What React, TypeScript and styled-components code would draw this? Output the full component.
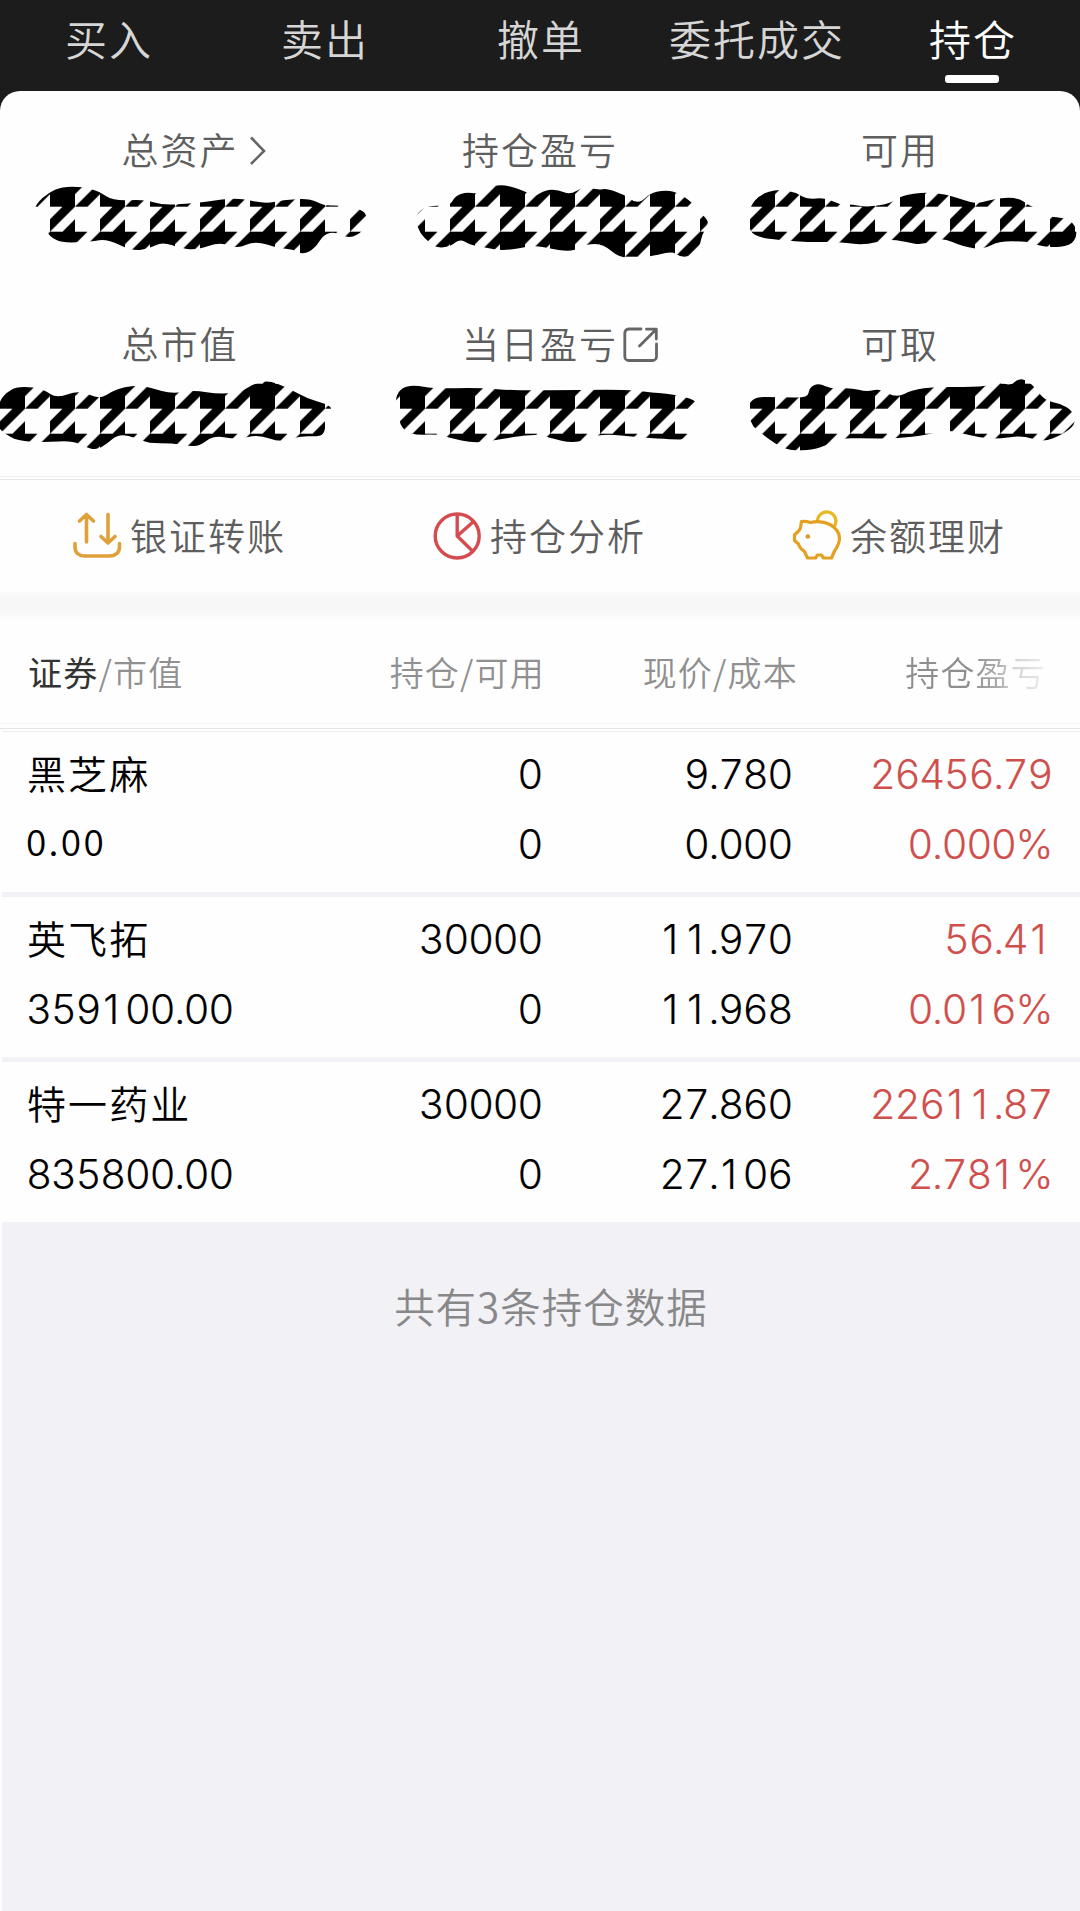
import React from "react";
import styled, { createGlobalStyle } from "styled-components";

const Global = createGlobalStyle`
  html, body { margin: 0; padding: 0; background: #fff; }
  * { box-sizing: border-box; }
`;

const cjk = `"Noto Sans CJK SC", "Noto Sans", sans-serif`;

const Page = styled.div`
  width: 1080px;
  height: 1911px;
  display: flex;
  flex-direction: column;
  overflow: hidden;
  background: #fefefe;
  font-family: ${cjk};
  font-weight: 350;
  white-space: nowrap;
`;

const Top = styled.div`
  background: #1c1c1c;
`;

const Tabs = styled.nav`
  height: 91px;
  display: grid;
  grid-template-columns: repeat(5, 216px);
`;

const Tab = styled.div<{ $active?: boolean }>`
  display: flex;
  flex-direction: column;
  align-items: center;
  padding-top: 8px;
  gap: 7px;
  font-size: 42px;
  line-height: 60px;
  letter-spacing: 2px;
  text-indent: 2px;
  color: ${(p) => (p.$active ? "#ffffff" : "#d6d6d6")};
`;

const Underline = styled.span`
  width: 54px;
  height: 8px;
  border-radius: 3px;
  background: #fff;
`;

const Card = styled.section`
  height: 385px;
  border-radius: 20px 20px 0 0;
  background: #fefefe;
  padding-top: 30px;
  display: flex;
  flex-direction: column;
`;

const SummaryRow = styled.div<{ $h: number }>`
  height: ${(p) => p.$h}px;
`;

const Labels = styled.div`
  height: 58px;
  display: grid;
  grid-template-columns: repeat(3, 360px);
  justify-items: center;
`;

const Label = styled.span`
  position: relative;
  font-size: 37px;
  height: 56px;
  line-height: 56px;
  letter-spacing: 2px;
  color: #5e5e5e;
`;

const After = styled.span<{ $gap: number }>`
  position: absolute;
  left: calc(100% + ${(p) => p.$gap}px);
  top: 12px;
  display: flex;
`;

const Strip = styled.svg`
  display: block;
  overflow: visible;
`;

const DoubleRule = styled.div`
  height: 4px;
  border-top: 1px solid #f0f0f0;
  border-bottom: 1px solid #e6e6e6;
`;

const Actions = styled.div`
  height: 111px;
  display: grid;
  grid-template-columns: repeat(3, 360px);
  padding-top: 27px;
`;

const Action = styled.div`
  height: 56px;
  display: flex;
  gap: 8px;
  padding-left: 72px;
  font-size: 37px;
  line-height: 56px;
  letter-spacing: 2px;
  color: #5e5e5e;
  svg {
    margin-top: 5px;
    flex: none;
    overflow: visible;
  }
`;

const Band = styled.div`
  height: 29px;
  background: linear-gradient(#fcfcfc, #f7f7f7 30%, #f7f7f7 70%, #fcfcfc);
`;

const Head = styled.div`
  height: 103px;
  padding: 27px 0 0 28px;
  display: grid;
  grid-template-columns: 300px 217px 253px 248px;
  font-size: 34px;
  line-height: 50px;
  letter-spacing: 1.2px;
  color: #909090;
`;

const HeadCell = styled.span<{ $right?: boolean; $fade?: boolean }>`
  height: 50px;
  text-align: ${(p) => (p.$right ? "right" : "left")};
  ${(p) =>
    p.$fade &&
    `justify-self: end;
     background: linear-gradient(90deg, #8e8e8e 45%, #acacac 66%, #d2d2d2 76%, #ececec 100%);
     -webkit-background-clip: text;
     background-clip: text;
     color: transparent;`}
  b {
    font-weight: 400;
    color: #333;
  }
`;

const HeadRule = styled.div`
  height: 9px;
  border-top: 1px solid #f4f4f4;
  display: flex;
  flex-direction: column;
  justify-content: flex-end;
  gap: 2px;
  &::before {
    content: "";
    height: 1px;
    background: #e4e4e4;
  }
  &::after {
    content: "";
    height: 1px;
    margin-left: 2px;
    background: #ececf0;
  }
`;

const List = styled.div`
  flex: 1;
  margin-left: 2px;
  background: #f1f1f6;
  display: flex;
  flex-direction: column;
  gap: 5px;
`;

const Holding = styled.div`
  height: 160px;
  background: #fefefe;
  padding-top: 8px;
  display: grid;
  grid-template-columns: 301px 241px 250px 260px;
  grid-auto-rows: 70px;
  margin-left: -2px;
  line-height: 70px;
  color: #000;
`;

const Name = styled.span`
  padding-left: 27px;
  font-size: 39px;
  line-height: 64px;
  letter-spacing: 2.1px;
`;

const NumCell = styled.span<{ $red?: boolean; $left?: boolean }>`
  font-family: Inter, "Liberation Sans", sans-serif;
  font-variant-numeric: tabular-nums;
  font-weight: 300;
  font-size: 40.5px;
  letter-spacing: -1.5px;
  -webkit-text-stroke: 0.15px currentColor;
  text-align: ${(p) => (p.$left ? "left" : "right")};
  padding-left: ${(p) => (p.$left ? 26 : 0)}px;
  color: ${(p) => (p.$red ? "#cf4f4d" : "#000")};
`;

// The figure one keeps the tabular cell but uses the footless proportional form.
const One = styled.span`
  display: inline-block;
  width: 24.7px;
  padding-right: 4px;
  text-align: center;
  font-variant-numeric: normal;
`;

const Plain = styled.span`
  padding-left: 26px;
  font-size: 37px;
  line-height: 61px;
  letter-spacing: 2.3px;
`;

const Footer = styled.div`
  padding: 49px 0 0 20px;
  text-align: center;
  font-size: 40.5px;
  line-height: 60px;
  letter-spacing: 1px;
  color: #888;
`;

const Num = ({ children, red, left }: { children: string; red?: boolean; left?: boolean }) => (
  <NumCell $red={red} $left={left}>
    {children.split(/(1)/).map((part, i) => (part === "1" ? <One key={i}>1</One> : part))}
  </NumCell>
);

type Pt = [number, number];

const toPage = (ox: number, oy: number, sx: number, pts: number[]): Pt[] => {
  const out: Pt[] = [];
  for (let i = 0; i < pts.length; i += 2) out.push([ox + pts[i] / sx, oy + pts[i + 1] / 3]);
  return out;
};

const smooth = (pts: Pt[]) => {
  const mid = (a: Pt, b: Pt) => `${((a[0] + b[0]) / 2).toFixed(1)} ${((a[1] + b[1]) / 2).toFixed(1)}`;
  const n = pts.length;
  let d = `M${mid(pts[n - 1], pts[0])}`;
  pts.forEach((p, i) => {
    d += `Q${p[0].toFixed(1)} ${p[1].toFixed(1)} ${mid(p, pts[(i + 1) % n])}`;
  });
  return d + "Z";
};

const S = 1568 / 540;

const firstRow = [
  toPage(0, 0, S, [100,635,105,612,140,578,180,560,240,560,285,573,330,603,420,598,470,615,540,612,600,605,690,592,770,612,820,600,900,595,940,617,990,616,1050,628,1068,650,1057,692,1015,717,975,695,940,703,915,745,880,764,850,748,810,745,740,722,690,747,640,726,570,750,530,745,470,726,435,745,385,754,310,716,265,725,180,729,145,710,135,690,105,655]),
  toPage(390, 180, 3, [78,125,80,100,115,76,180,78,195,48,230,36,262,42,310,16,355,16,415,38,430,52,470,28,505,30,540,44,580,20,625,30,650,25,705,45,730,65,755,65,780,40,820,31,860,35,908,68,925,95,945,110,957,130,935,165,930,200,895,232,870,230,845,213,775,232,690,236,640,192,590,192,555,212,510,212,430,195,400,203,335,212,290,203,240,195,210,176,180,200,140,204,115,185,90,160]),
  toPage(540, 0, S, [608,655,610,618,640,583,690,567,740,576,775,598,830,593,870,614,905,613,950,622,1020,610,1050,586,1120,576,1180,583,1230,600,1270,612,1330,593,1390,593,1420,618,1470,635,1480,650,1520,653,1550,668,1561,705,1540,738,1480,742,1445,735,1410,724,1330,724,1290,748,1230,741,1165,711,1110,736,1060,725,1010,717,940,736,870,725,790,727,690,720,640,713,608,695]),
];

const secondRow = [
  toPage(0, 300, S, [-6,305,30,268,65,259,125,266,165,296,230,270,290,299,330,270,395,254,440,264,500,282,560,270,640,283,700,275,740,250,780,242,830,260,890,295,950,313,966,327,945,350,944,398,925,410,870,408,815,428,750,403,690,419,620,406,580,438,545,438,500,430,430,430,400,415,345,401,310,432,280,450,250,442,210,422,130,427,50,423,10,398,-6,380]),
  toPage(0, 300, S, [1146,305,1160,266,1200,254,1260,266,1390,263,1500,272,1688,269,1833,269,1868,275,1958,283,2022,300,2026,330,2008,370,1998,419,1948,418,1868,413,1738,400,1673,432,1588,412,1568,401,1450,417,1380,431,1300,412,1270,403,1190,405,1158,372,1162,330]),
  toPage(540, 300, S, [604,291,700,291,778,294,782,262,810,249,848,268,900,263,950,276,985,265,1035,294,1080,270,1150,260,1280,262,1340,247,1365,257,1395,232,1430,252,1465,302,1510,310,1548,333,1556,372,1520,402,1460,427,1400,406,1330,417,1280,414,1220,398,1170,390,1130,404,1030,417,940,414,870,415,830,437,790,449,730,453,690,437,645,402,608,370]),
];

// Scribbled houndstooth strokes covering the account figures.
const Scribble = ({ id, shapes, top, phase }: { id: string; shapes: Pt[][]; top: number; phase: number }) => (
  <Strip width="1080" height="78" viewBox={`0 ${top} 1080 78`}>
    <defs>
      <pattern id={id} width="50" height="50" x="0" y={phase} patternUnits="userSpaceOnUse">
        <rect width="50" height="50" fill="#fefefe" />
        <path
          d="M0 25H25V50H0ZM12.5 0H25L0 25V12.5ZM25 12.5V25H12.5ZM25 25H37.5L25 37.5ZM50 25V37.5L37.5 50H25Z"
          fill="#000"
        />
      </pattern>
    </defs>
    {shapes.map((s, i) => (
      <path key={i} d={smooth(s)} fill={`url(#${id})`} />
    ))}
  </Strip>
);

const Chevron = () => (
  <svg width="18" height="36" viewBox="0 0 18 36" fill="none" stroke="#666" strokeWidth="2.6">
    <path d="M2 4.5 15 18 2 31" />
  </svg>
);

const External = () => (
  <svg width="36" height="36" viewBox="0 0 36 36" fill="none" stroke="#666" strokeWidth="2.8" strokeLinecap="round" strokeLinejoin="round">
    <path d="M18 2H5.5A4 4 0 0 0 1.8 6V29.5A4 4 0 0 0 5.8 33.5H29.5A4 4 0 0 0 33.5 29.5V17M23.5 2.2H33.3V12M33 2.5 16.5 19" />
  </svg>
);

const TransferIcon = () => (
  <svg width="50" height="50" viewBox="0 0 50 50" fill="none" stroke="#e0a03a" strokeWidth="3.6" strokeLinecap="round" strokeLinejoin="round">
    <path d="M14.500 30V3.500M7.500 9 14.500 2.500 21.500 9M36 2.500V30M29 24.500 36 31 43 24.500" />
    <path d="M3 31.500V35C3 41 7 44 12.500 44H37C43 44 47.500 41 47.500 35V31.500" />
  </svg>
);

const PieIcon = () => (
  <svg width="50" height="50" viewBox="0 0 50 50" fill="none" stroke="#d44c50" strokeWidth="3.4" strokeLinejoin="round">
    <circle cx="25.200" cy="24" r="22" />
    <path d="M25.200 2V24L41 39.500M25.200 24 41 10" />
  </svg>
);

const PigIcon = () => (
  <svg width="50" height="50" viewBox="0 0 50 50" fill="none" strokeWidth="3.2" strokeLinecap="round" strokeLinejoin="round">
    <path d="M25.500 9A9.200 9.200 0 1 1 42.500 14" stroke="#e8b822" />
    <path
      d="M9.500 9.500C12.500 9 15.500 9.500 18.500 10.500C25 9 32 9.500 38 12.500C44 16 47.500 21 47.500 26.500C47.500 32 44.500 36 42.500 39L39.500 46H31.500L29.500 43H25.500L23.500 46H15.500L12.500 39.500C9 37 7 34.500 6.500 32L2.500 28.500V23L7 18.500C9.500 16 8.500 13 9.500 9.500Z"
      stroke="#e3a021"
    />
    <circle cx="15.800" cy="24.500" r="2.300" fill="#d99a2b" />
  </svg>
);

const holdings = [
  { name: "黑芝麻", value: "0.00", qty: "0", avail: "0", price: "9.780", cost: "0.000", pl: "26456.79", pct: "0.000%" },
  { name: "英飞拓", value: "359100.00", qty: "30000", avail: "0", price: "11.970", cost: "11.968", pl: "56.41", pct: "0.016%" },
  { name: "特一药业", value: "835800.00", qty: "30000", avail: "0", price: "27.860", cost: "27.106", pl: "22611.87", pct: "2.781%" },
];

export default function App() {
  return (
    <Page>
      <Global />
      <Top>
        <Tabs>
          {["买入", "卖出", "撤单", "委托成交"].map((t) => (
            <Tab key={t}>{t}</Tab>
          ))}
          <Tab $active>
            持仓
            <Underline />
          </Tab>
        </Tabs>
        <Card>
          <SummaryRow $h={194}>
            <Labels>
              <Label>
                总资产
                <After $gap={10}><Chevron /></After>
              </Label>
              <Label>持仓盈亏</Label>
              <Label>可用</Label>
            </Labels>
            <Scribble id="tooth-a" shapes={firstRow} top={179} phase={206.7} />
          </SummaryRow>
          <SummaryRow $h={161}>
            <Labels>
              <Label>总市值</Label>
              <Label>
                当日盈亏
                <After $gap={5}><External /></After>
              </Label>
              <Label>可取</Label>
            </Labels>
            <Scribble id="tooth-b" shapes={secondRow} top={373} phase={408.7} />
          </SummaryRow>
        </Card>
      </Top>
      <DoubleRule />
      <Actions>
        <Action><TransferIcon />银证转账</Action>
        <Action><PieIcon />持仓分析</Action>
        <Action><PigIcon />余额理财</Action>
      </Actions>
      <Band />
      <Head>
        <HeadCell><b>证券</b>/市值</HeadCell>
        <HeadCell $right>持仓/可用</HeadCell>
        <HeadCell $right>现价/成本</HeadCell>
        <HeadCell $fade>持仓盈亏</HeadCell>
      </Head>
      <HeadRule />
      <List>
        {holdings.map((h) => (
          <Holding key={h.name}>
            <Name>{h.name}</Name>
            <Num>{h.qty}</Num>
            <Num>{h.price}</Num>
            <Num red>{h.pl}</Num>
            {h.value === "0.00" ? <Plain>{h.value}</Plain> : <Num left>{h.value}</Num>}
            <Num>{h.avail}</Num>
            <Num>{h.cost}</Num>
            <Num red>{h.pct}</Num>
          </Holding>
        ))}
        <Footer>共有3条持仓数据</Footer>
      </List>
    </Page>
  );
}
